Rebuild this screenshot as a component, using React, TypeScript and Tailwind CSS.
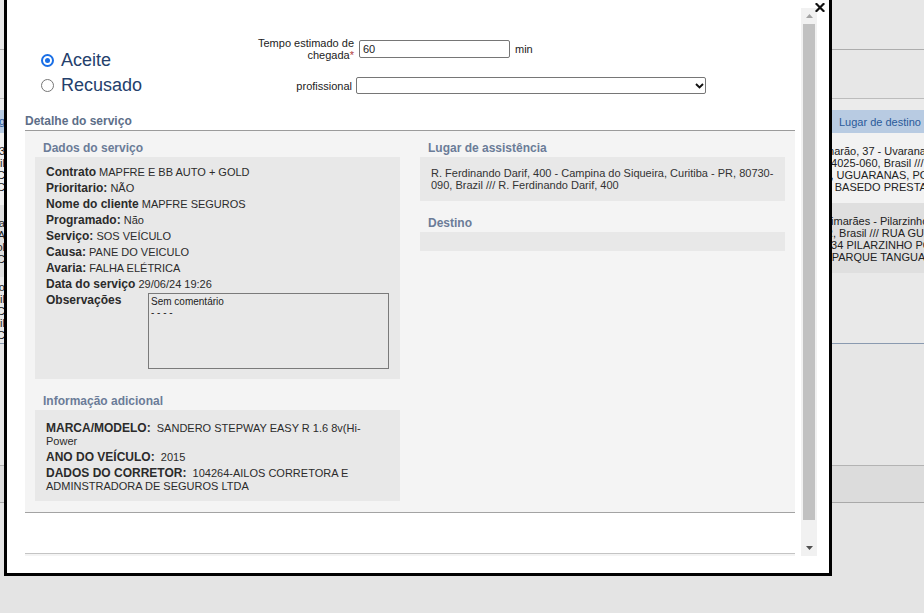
import React from "react";

function Radio({ checked }: { checked: boolean }) {
  return checked ? (
    <span className="flex h-[13px] w-[13px] shrink-0 items-center justify-center rounded-full border-2 border-[#1a6fe6] bg-white">
      <span className="h-[5px] w-[5px] rounded-full bg-[#1a6fe6]" />
    </span>
  ) : (
    <span className="block h-[13px] w-[13px] shrink-0 rounded-full border border-[#767676] bg-white" />
  );
}

function EndLine({ text }: { text: string }) {
  return <div className="flex h-[12px] justify-end whitespace-nowrap leading-[12px]">{text}</div>;
}

const dados: [string, string][] = [
  ["Contrato", "MAPFRE E BB AUTO + GOLD"],
  ["Prioritario:", "NÃO"],
  ["Nome do cliente", "MAPFRE SEGUROS"],
  ["Programado:", "Não"],
  ["Serviço:", "SOS VEÍCULO"],
  ["Causa:", "PANE DO VEICULO"],
  ["Avaria:", "FALHA ELÉTRICA"],
  ["Data do serviço", "29/06/24 19:26"],
];

export default function App() {
  return (
    <div className="relative h-[613px] w-[924px] overflow-hidden bg-[#e4e4e4] text-[#222] [font-family:'Liberation_Sans',Arial,sans-serif]">
      {/* background page */}
      <div className="flex flex-col">
        <div className="h-[50px] border-b border-[#adadad] bg-[#e7e7e7]" />
        <div className="h-[49px] border-b border-[#bcbcbc] bg-[#e7e7e7]" />
        <div className="h-[11px] bg-[#ebebeb]" />
        <div className="flex h-[234px] border-b border-[#8a9ab0] text-[11px]">
          <div className="flex w-[5px] flex-col overflow-hidden">
            <div className="flex h-[23px] items-center justify-end whitespace-nowrap bg-[#b8cbe2] text-[11px] text-[#2a5a9a] underline">
              Lugar de orig
            </div>
            <div className="h-[72px] bg-[#f0f0f0] pt-[12px]">
              <EndLine text="Rua 123" />
              <EndLine text="Brasil" />
              <EndLine text="ABC" />
              <EndLine text="ABC" />
            </div>
            <div className="h-[72px] bg-[#dfdfdf] pt-[12px]">
              <EndLine text="Pilarzinha" />
              <EndLine text="RUA" />
              <EndLine text="Pol" />
              <EndLine text="ABC" />
            </div>
            <div className="flex-1 bg-[#e9e9e9] pt-[4px]">
              <EndLine text="Centro" />
              <EndLine text="Brasil" />
              <EndLine text="ABC" />
              <EndLine text="Pil" />
              <EndLine text="ABC" />
            </div>
          </div>
          <div className="flex-1" />
          <div className="flex w-[99px] flex-col overflow-hidden">
            <div className="h-[23px] whitespace-nowrap bg-[#b8cbe2] pl-[14px] pt-[1px] text-[11px] leading-[23px] text-[#2a5a9a]">
              Lugar de destino
            </div>
            <div className="h-[70px] whitespace-nowrap bg-[#f2f2f2] pt-[12px] leading-[12px]">
              <div>marão, 37 - Uvaranas, Ponta</div>
              <div>84025-060, Brasil /// RUA</div>
              <div>T, UGUARANAS, PONTA</div>
              <div>), BASEDO PRESTADOR</div>
            </div>
            <div className="h-[70px] whitespace-nowrap bg-[#dfdfdf] pt-[12px] leading-[12px]">
              <div>uimarães - Pilarzinho</div>
              <div>R, Brasil /// RUA GUA</div>
              <div>234 PILARZINHO POR</div>
              <div>- PARQUE TANGUA</div>
            </div>
            <div className="flex-1 bg-[#e9e9e9]" />
          </div>
        </div>
        <div className="h-[122px] border-b border-[#b3b3b3] bg-[#e6e6e6]" />
        <div className="h-[37px] border-b border-[#a9a9a9] bg-[#dcdcdc]" />
      </div>

      {/* modal */}
      <div className="absolute left-[4px] top-[-3px] h-[579px] w-[828px] border-[3px] border-black bg-white pb-[17px] pl-[18px] pr-[12px] pt-[8px]">
        <svg className="absolute left-[808px] top-[3px]" width="10" height="9" viewBox="0 0 10 9">
          <path d="M1.5 1 L8.5 8 M8.5 1 L1.5 8" stroke="#111" strokeWidth="2.2" strokeLinecap="square" />
        </svg>
        <div className="flex h-full">
          <div className="flex-1 overflow-hidden pr-[6px]">
            {/* top form */}
            <div className="flex h-[102px]">
              <div className="w-[195px] pl-[16px] pt-[40px] text-[18px] text-[#24406c]">
                <div className="flex h-[24px] items-center gap-[7px]">
                  <Radio checked />
                  <span>Aceite</span>
                </div>
                <div className="mt-[1px] flex h-[24px] items-center gap-[7px]">
                  <Radio checked={false} />
                  <span>Recusado</span>
                </div>
              </div>
              <div className="pt-[29px] text-[11px] text-[#222]">
                <div className="flex h-[24px] items-center">
                  <div className="w-[134px] text-right leading-[12px]">
                    Tempo estimado de
                    <br />
                    chegada<span className="text-[#b0413e]">*</span>
                  </div>
                  <div className="ml-[5px] flex h-[18px] w-[151px] items-center rounded-[2px] border border-[#767676] bg-white px-[3px]">
                    60
                  </div>
                  <span className="ml-[5px]">min</span>
                </div>
                <div className="mt-[16px] flex h-[17px] items-center">
                  <div className="w-[132px] pt-[1px] text-right">profissional</div>
                  <div className="ml-[4px] flex h-[17px] w-[350px] items-center justify-end rounded-[2px] border border-[#767676] bg-white pr-[1px]">
                    <svg width="9" height="6" viewBox="0 0 9 6">
                      <path d="M1 1 L4.5 4.5 L8 1" stroke="#111" strokeWidth="1.9" fill="none" />
                    </svg>
                  </div>
                </div>
              </div>
            </div>

            <div className="h-[21px] overflow-hidden border-b border-[#9b9b9b] text-[12px] font-bold leading-[22px] text-[#5d6e88]">
              Detalhe do serviço
            </div>

            <div className="flex gap-[20px] border-b border-[#a3a3a3] bg-[#f4f4f4] px-[10px] pb-[11px] pt-[6px] text-[#2b2b2b]">
              <div className="w-[365px]">
                <div className="h-[20px] pl-[8px] text-[12px] font-bold leading-[22px] text-[#6b7c98]">
                  Dados do serviço
                </div>
                <div className="bg-[#e8e8e8] px-[11px] pb-[10px] pt-[7px]">
                  {dados.map(([l, v]) => (
                    <div key={l} className="h-[16px] whitespace-nowrap text-[11px] leading-[16px]">
                      <span className="text-[12px] font-bold">{l}</span> <span>{v}</span>
                    </div>
                  ))}
                  <div className="flex items-start">
                    <div className="w-[102px] text-[12px] font-bold leading-[16px]">Observações</div>
                    <div className="mt-[1px] h-[76px] w-[241px] border border-[#7a7a7a] px-[2px] pt-[2px] text-[10px] leading-[11px] text-[#222]">
                      Sem comentário
                      <br />- - - -
                    </div>
                  </div>
                </div>
                <div className="mt-[11px] h-[20px] pl-[8px] text-[12px] font-bold leading-[22px] text-[#6b7c98]">
                  Informação adicional
                </div>
                <div className="bg-[#e8e8e8] pb-[8px] pl-[11px] pr-[11px] pt-[12px] text-[11px] leading-[13px]">
                  <div className="mb-[3px]">
                    <span className="text-[12px] font-bold">MARCA/MODELO:</span>
                    {"\u00a0 "}SANDERO STEPWAY EASY R 1.6 8v(Hi-Power
                  </div>
                  <div className="mb-[3px]">
                    <span className="text-[12px] font-bold">ANO DO VEÍCULO:</span>
                    {"\u00a0 "}2015
                  </div>
                  <div>
                    <span className="text-[12px] font-bold">DADOS DO CORRETOR:</span>
                    {"\u00a0 "}104264-AILOS CORRETORA E ADMINSTRADORA DE SEGUROS LTDA
                  </div>
                </div>
              </div>
              <div className="w-[365px]">
                <div className="h-[20px] pl-[8px] text-[12px] font-bold leading-[22px] text-[#6b7c98]">
                  Lugar de assistência
                </div>
                <div className="bg-[#e8e8e8] py-[10px] pl-[11px] pr-[8px] text-[11px] leading-[12px] text-[#333]">
                  R. Ferdinando Darif, 400 - Campina do Siqueira, Curitiba - PR, 80730-090, Brazil /// R. Ferdinando Darif, 400
                </div>
                <div className="mt-[11px] h-[20px] pl-[8px] text-[12px] font-bold leading-[22px] text-[#6b7c98]">
                  Destino
                </div>
                <div className="h-[19px] bg-[#e8e8e8]" />
              </div>
            </div>
            <div className="h-[41px] border-b border-[#c4c4c4] bg-white" />
            <div className="h-[20px] bg-[#f4f4f4]" />
          </div>

          {/* scrollbar */}
          <div className="flex w-[16px] flex-col bg-[#f1f1f1]">
            <div className="flex h-[16px] items-center justify-center">
              <svg width="7" height="4" viewBox="0 0 7 4">
                <path d="M0 4 L3.5 0 L7 4 Z" fill="#a3a3a3" />
              </svg>
            </div>
            <div className="mx-[2px] h-[496px] bg-[#c1c1c1]" />
            <div className="flex-1" />
            <div className="flex h-[16px] items-center justify-center">
              <svg width="7" height="4" viewBox="0 0 7 4">
                <path d="M0 0 L3.5 4 L7 0 Z" fill="#505050" />
              </svg>
            </div>
          </div>
        </div>
      </div>
    </div>
  );
}
